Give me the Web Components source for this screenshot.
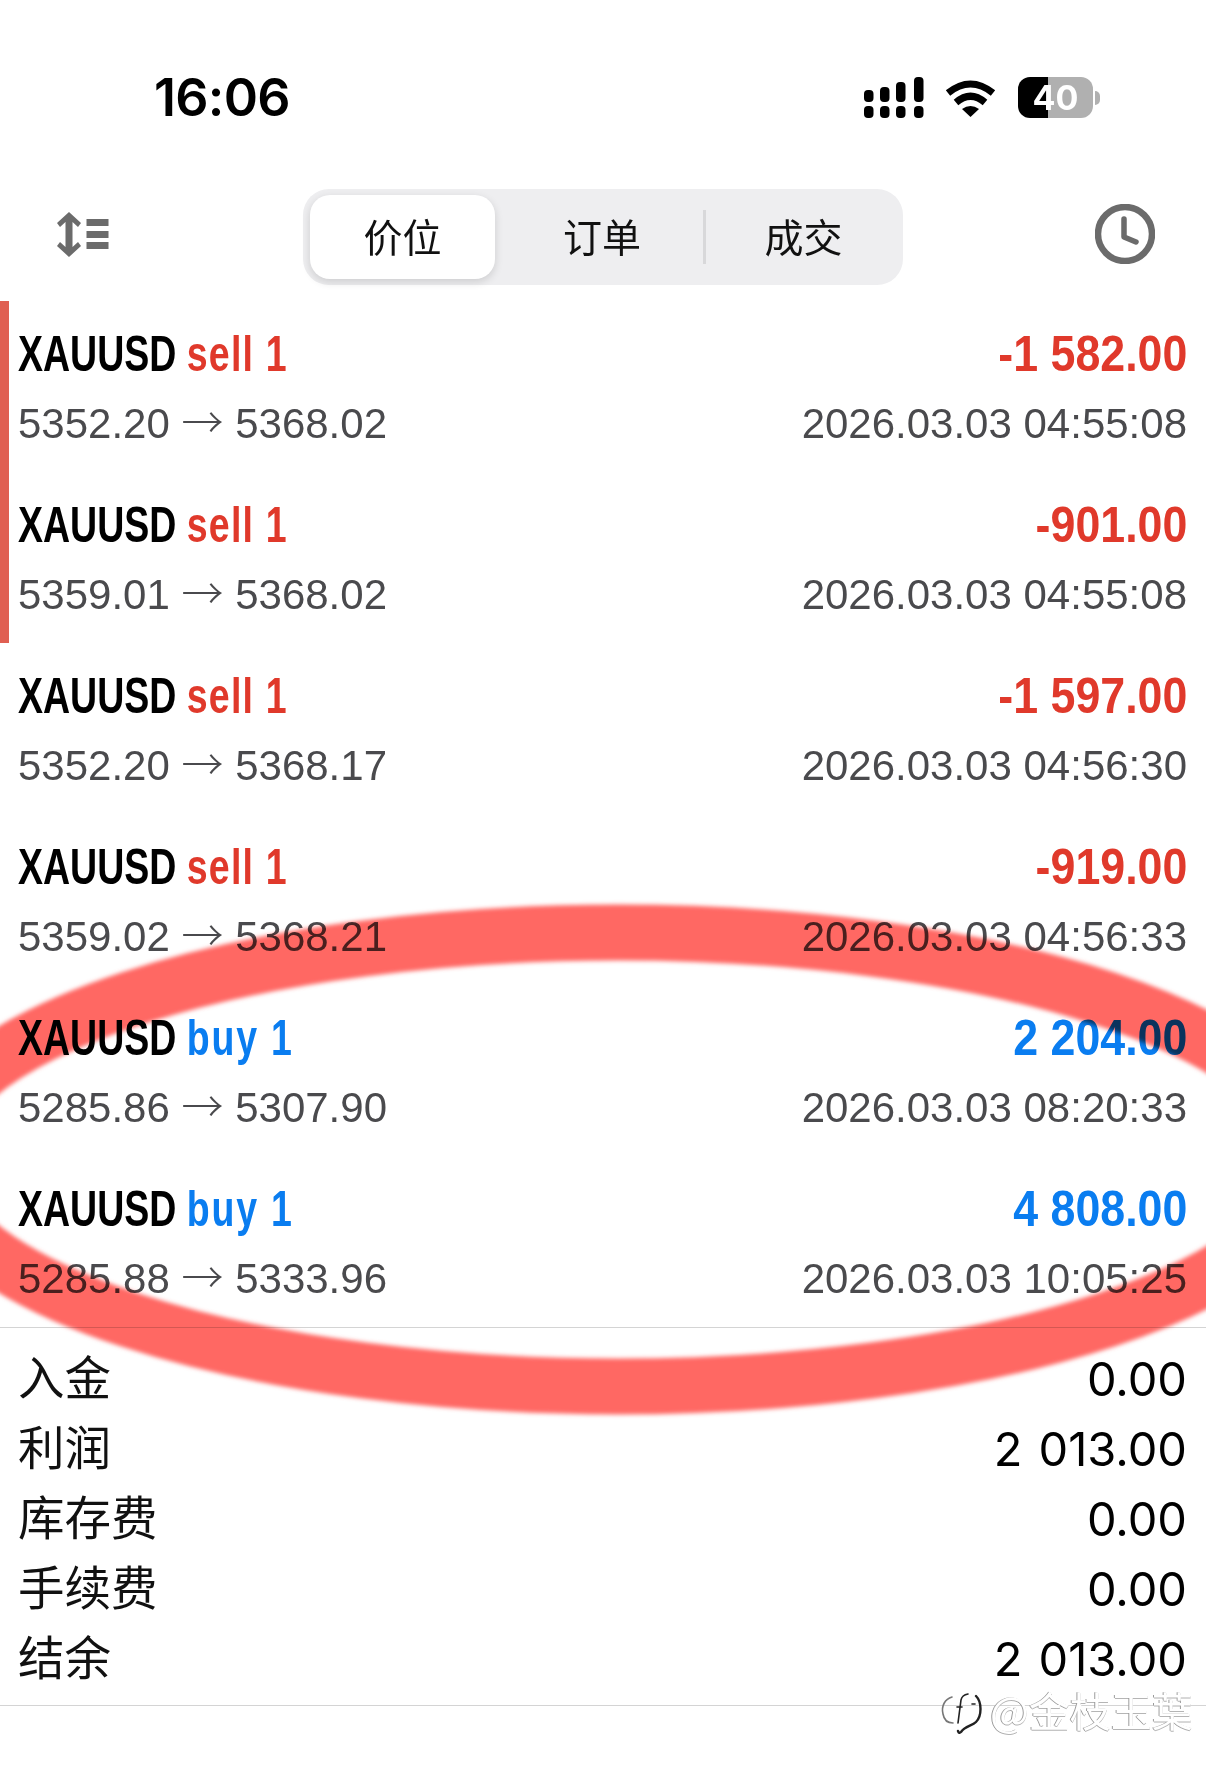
<!DOCTYPE html>
<html lang="zh">
<head>
<meta charset="utf-8">
<title>历史</title>
<style>
  html, body { margin: 0; background: #fff; }
  body { width: 1206px; height: 1777px; overflow: hidden; position: relative; font-family: "Liberation Sans", "Noto Sans CJK SC", sans-serif; }
</style>
</head>
<body>
<status-bar time="16:06" level="40"></status-bar>
<tool-bar>
  <seg-tab active>价位</seg-tab>
  <seg-tab>订单</seg-tab>
  <seg-tab divided>成交</seg-tab>
</tool-bar>
<trade-row flagged side="sell" from="5352.20" to="5368.02" amount="-1 582.00" time="2026.03.03 04:55:08"></trade-row>
<trade-row flagged side="sell" from="5359.01" to="5368.02" amount="-901.00" time="2026.03.03 04:55:08"></trade-row>
<trade-row side="sell" from="5352.20" to="5368.17" amount="-1 597.00" time="2026.03.03 04:56:30"></trade-row>
<trade-row side="sell" from="5359.02" to="5368.21" amount="-919.00" time="2026.03.03 04:56:33"></trade-row>
<trade-row side="buy" from="5285.86" to="5307.90" amount="2 204.00" time="2026.03.03 08:20:33"></trade-row>
<trade-row side="buy" from="5285.88" to="5333.96" amount="4 808.00" time="2026.03.03 10:05:25"></trade-row>
<summary-list>
  <summary-row label="入金" value="0.00"></summary-row>
  <summary-row label="利润" value="2 013.00"></summary-row>
  <summary-row label="库存费" value="0.00"></summary-row>
  <summary-row label="手续费" value="0.00"></summary-row>
  <summary-row label="结余" value="2 013.00"></summary-row>
</summary-list>
<ink-circle></ink-circle>
<water-mark>@金枝玉葉</water-mark>

<script>
class StatusBar extends HTMLElement {
  connectedCallback() {
    const shadowRoot = this.attachShadow({ mode: 'open' });
    shadowRoot.innerHTML = `
    <style>
      :host { display: flex; height: 112px; padding-top: 77px; box-sizing: content-box; align-items: flex-start; }
      .time { margin-left: 154px; width: 710px; font: 600 52px/41px Inter, sans-serif; color: #000; letter-spacing: -.7px; }
      .signal { width: 60px; height: 41px; }
      .wifi { width: 51px; height: 38px; margin: 2px 0 0 21px; }
      .battery {
        width: 75px; height: 41px; margin-left: 22px; border-radius: 12px;
        background: linear-gradient(90deg, #000 40%, #b0b0b0 40%);
        color: #fff; font: 700 34px/41px Inter, sans-serif; text-align: center;
      }
      .nub { width: 5px; height: 14px; margin: 14px 0 0 2px; border-radius: 0 5px 5px 0; background: #b0b0b0; }
    </style>
    <div class="time">${this.getAttribute('time')}</div>
    <svg class="signal" viewBox="0 0 60 41" fill="#000">
      <rect x="0" y="29" width="9.5" height="12" rx="4"/><rect x="16" y="29" width="9.5" height="12" rx="4"/>
      <rect x="32" y="29" width="9.5" height="12" rx="4"/><rect x="50" y="29" width="9.5" height="12" rx="4"/>
      <rect x="0" y="13" width="9.5" height="12" rx="4"/><rect x="16" y="10" width="9.5" height="15" rx="4"/>
      <rect x="32" y="5" width="9.5" height="20" rx="4"/><rect x="50" y="0" width="9.5" height="25" rx="4"/>
    </svg>
    <svg class="wifi" viewBox="0 0 51 38" fill="none" stroke="#000" stroke-width="7">
      <path d="M3 14Q25.5 -4 48 14"/>
      <path d="M11 23.5Q25.5 11 40 23.5"/>
      <path d="M17 30Q25.5 24 34 30L25.5 38Z" fill="#000" stroke="none"/>
    </svg>
    <div class="battery">${this.getAttribute('level')}</div>
    <div class="nub"></div>
`;
  }
}

class ToolBar extends HTMLElement {
  connectedCallback() {
    const shadowRoot = this.attachShadow({ mode: 'open' });
    shadowRoot.innerHTML = `
    <style>
      :host { display: grid; grid-template-columns: 303px 600px 303px; height: 96px; margin-bottom: 16px; align-items: center; }
      .sort { width: 53px; height: 45px; margin-left: 56px; margin-bottom: 6px; }
      .clock { width: 60px; height: 60px; justify-self: end; margin-right: 51px; margin-bottom: 6px; }
      .tabs {
        display: grid; grid-template-columns: 185px 214px 189px; height: 84px; padding: 6px 5px 6px 7px;
        background: #eeeef0; border-radius: 26px;
      }
    </style>
    <svg class="sort" viewBox="0 0 53 45" fill="#6b6b6b">
      <path d="M13 0L25 11L22 15L16.5 10V35L22 30L25 34L13 45L1 34L4 30L9.5 35V10L4 15L1 11Z"/>
      <rect x="30.5" y="7" width="22" height="7"/><rect x="30.5" y="19" width="22" height="7"/><rect x="30.5" y="30" width="22" height="7"/>
    </svg>
    <div class="tabs"><slot></slot></div>
    <svg class="clock" viewBox="0 0 60 60" fill="none" stroke="#6b6b6b" stroke-linecap="round">
      <circle cx="30" cy="30" r="27" stroke-width="6.5"/>
      <path d="M29 15V33L41 38" stroke-width="5.5" stroke-linejoin="round"/>
    </svg>
`;
  }
}

class SegTab extends HTMLElement {
  connectedCallback() {
    const shadowRoot = this.attachShadow({ mode: 'open' });
    shadowRoot.innerHTML = `
    <style>
      :host {
        display: flex; align-items: center; justify-content: center; position: relative; padding-bottom: 4px; box-sizing: border-box;
        font: 400 39px/1 "Noto Sans CJK SC", sans-serif; color: #111;
      }
      :host([active]) { background: #fff; border-radius: 20px; box-shadow: 0 3px 8px rgba(0, 0, 0, .14); }
      :host([divided])::before {
        content: ""; position: absolute; left: -6px; top: 15px; bottom: 15px; width: 3px; background: #d8d8da;
      }
    </style>
    <slot></slot>
`;
  }
}

class TradeRow extends HTMLElement {
  connectedCallback() {
    const shadowRoot = this.attachShadow({ mode: 'open' });
    const side = this.getAttribute('side');
    shadowRoot.innerHTML = `
    <style>
      :host {
        display: grid; grid-template-columns: 1fr auto; row-gap: 10px; height: 171px; box-sizing: border-box;
        padding: 23px 19px 18px 18px; color: #4a4a4d;
      }
      :host([flagged]) { box-shadow: inset 9px 0 0 #e05f52; }
      .head {
        font: 700 50px/60px "Liberation Sans", sans-serif; white-space: pre;
        transform: scaleX(.75); transform-origin: left center;
      }
      .symbol { color: #000; }
      .side { color: #e0392b; letter-spacing: 1.6px; }
      .amount { text-align: right; color: #e0392b; transform: scaleX(.895); transform-origin: right center; }
      :host([side="buy"]) .side, :host([side="buy"]) .amount { color: #0a7df0; }
      :host([side="buy"]) .side { letter-spacing: 2.4px; }
      .detail { font: 400 42px/60px "Liberation Sans", sans-serif; white-space: pre; }
      .arrow { font-family: "Noto Sans CJK SC", sans-serif; font-weight: 300; line-height: 0; }
      .when { text-align: right; }
    </style>
    <div class="head"><span class="symbol">XAUUSD</span> <span class="side">${side} 1</span></div>
    <div class="head amount">${this.getAttribute('amount')}</div>
    <div class="detail">${this.getAttribute('from')} <span class="arrow">→</span> ${this.getAttribute('to')}</div>
    <div class="detail when">${this.getAttribute('time')}</div>
`;
  }
}

class SummaryList extends HTMLElement {
  connectedCallback() {
    const shadowRoot = this.attachShadow({ mode: 'open' });
    shadowRoot.innerHTML = `
    <style>
      :host {
        display: block; height: 379px; box-sizing: border-box; padding: 15px 19px 0 18px;
        border-top: 1px solid #d4d4d4; border-bottom: 1px solid #d4d4d4;
      }
    </style>
    <slot></slot>
`;
  }
}

class SummaryRow extends HTMLElement {
  connectedCallback() {
    const shadowRoot = this.attachShadow({ mode: 'open' });
    shadowRoot.innerHTML = `
    <style>
      :host { display: flex; justify-content: space-between; align-items: center; height: 70px; color: #000; }
      .label { font: 400 46.5px/1 "Noto Sans CJK SC", sans-serif; color: #111; margin-bottom: 5px; }
      .value { font: 400 47px/1 Inter, sans-serif; word-spacing: 3px; }
    </style>
    <div class="label">${this.getAttribute('label')}</div>
    <div class="value">${this.getAttribute('value')}</div>
`;
  }
}

// hand drawn marker stroke, lies over the rows
class InkCircle extends HTMLElement {
  connectedCallback() {
    const shadowRoot = this.attachShadow({ mode: 'open' });
    shadowRoot.innerHTML = `
    <style>
      :host { position: absolute; left: 0; top: 0; width: 1206px; height: 1777px; pointer-events: none; mix-blend-mode: multiply; }
      svg { display: block; }
    </style>
    <svg width="1206" height="1777" viewBox="0 0 1206 1777">
      <defs><filter id="soft"><feGaussianBlur stdDeviation="2"/></filter></defs>
      <ellipse cx="618" cy="1159.5" rx="690" ry="227" fill="none" stroke="#ff6763" stroke-width="56" filter="url(#soft)"/>
    </svg>
`;
  }
}

class WaterMark extends HTMLElement {
  connectedCallback() {
    const shadowRoot = this.attachShadow({ mode: 'open' });
    shadowRoot.innerHTML = `
    <style>
      :host {
        position: absolute; left: 940px; top: 1684px; display: flex; align-items: center; gap: 6px;
        font: 400 41px/30px "Noto Sans CJK SC", sans-serif; color: #fff; white-space: nowrap;
        text-shadow: -1px 0 0 #9a9a9a, 0 1px 0 #b5b5b5;
      }
      svg { width: 44px; height: 44px; flex: none; margin-top: 6px; }
    </style>
    <svg viewBox="0 0 44 44" fill="none" stroke="#222" stroke-width="1.6" stroke-linecap="round">
      <path d="M12 7C5 9 1 16 3 24C4 30 8 33 13 33" stroke="#777"/>
      <path d="M18 33L21 10Q22 5 28 4"/>
      <path d="M17 17H22"/>
      <path d="M32 14H35"/>
      <path d="M36 6C42 12 42 26 36 32C32 36 25 36 21 42Q19 44 18 41" stroke-width="2.4"/>
    </svg>
    <slot></slot>
`;
  }
}

customElements.define('status-bar', StatusBar);
customElements.define('tool-bar', ToolBar);
customElements.define('seg-tab', SegTab);
customElements.define('trade-row', TradeRow);
customElements.define('summary-list', SummaryList);
customElements.define('summary-row', SummaryRow);
customElements.define('ink-circle', InkCircle);
customElements.define('water-mark', WaterMark);
</script>
</body>
</html>
